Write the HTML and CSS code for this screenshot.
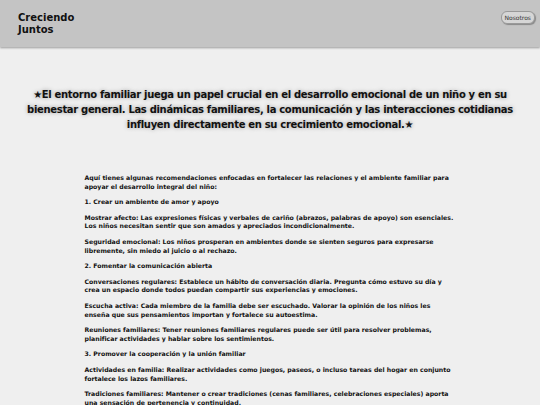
FILE: index.html
```html
<!DOCTYPE html>
<html lang="es">
<head>
<meta charset="utf-8">
<title>Creciendo Juntos</title>
<link rel="stylesheet" href="styles.css">
</head>
<body>
<header class="topbar">
  <div class="brand">Creciendo<br>Juntos</div>
  <button class="nav-btn">Nosotros</button>
</header>
<main class="content">
  <h1 class="lead">★El entorno familiar juega un papel crucial en el desarrollo emocional de un niño y en su bienestar general. Las dinámicas familiares, la comunicación y las interacciones cotidianas influyen directamente en su crecimiento emocional.★</h1>
  <section class="article">
    <p>Aquí tienes algunas recomendaciones enfocadas en fortalecer las relaciones y el ambiente familiar para apoyar el desarrollo integral del niño:</p>
    <p>1. Crear un ambiente de amor y apoyo</p>
    <p>Mostrar afecto: Las expresiones físicas y verbales de cariño (abrazos, palabras de apoyo) son esenciales. Los niños necesitan sentir que son amados y apreciados incondicionalmente.</p>
    <p>Seguridad emocional: Los niños prosperan en ambientes donde se sienten seguros para expresarse libremente, sin miedo al juicio o al rechazo.</p>
    <p>2. Fomentar la comunicación abierta</p>
    <p>Conversaciones regulares: Establece un hábito de conversación diaria. Pregunta cómo estuvo su día y crea un espacio donde todos puedan compartir sus experiencias y emociones.</p>
    <p>Escucha activa: Cada miembro de la familia debe ser escuchado. Valorar la opinión de los niños les enseña que sus pensamientos importan y fortalece su autoestima.</p>
    <p>Reuniones familiares: Tener reuniones familiares regulares puede ser útil para resolver problemas, planificar actividades y hablar sobre los sentimientos.</p>
    <p>3. Promover la cooperación y la unión familiar</p>
    <p>Actividades en familia: Realizar actividades como juegos, paseos, o incluso tareas del hogar en conjunto fortalece los lazos familiares.</p>
    <p>Tradiciones familiares: Mantener o crear tradiciones (cenas familiares, celebraciones especiales) aporta una sensación de pertenencia y continuidad.</p>
  </section>
</main>
</body>
</html>
```
FILE: styles.css
```css
html, body {
  margin: 0;
  padding: 0;
}
body {
  background: #efefef;
  font-family: "DejaVu Sans", sans-serif;
  color: #111;
  overflow: hidden;
}
.topbar {
  height: 47px;
  background: #c4c4c4;
  box-shadow: 0 1px 2px rgba(0,0,0,0.35);
  display: flex;
  justify-content: space-between;
  align-items: flex-start;
  padding: 0 5px 0 18px;
  box-sizing: border-box;
}
.brand {
  margin-top: 12px;
  font-size: 10px;
  font-weight: bold;
  line-height: 12px;
  color: #111;
}
.nav-btn {
  margin-top: 11px;
  font-family: "DejaVu Sans", sans-serif;
  font-size: 6px;
  color: #333;
  background: #d6d6d6;
  border: 1px solid #999;
  border-radius: 6px;
  padding: 2px 3px;
  box-shadow: 1px 1px 1px rgba(0,0,0,0.3);
}
.content {
  padding-top: 40px;
}
.lead {
  margin: 0 auto;
  width: 494px;
  text-align: center;
  font-size: 10px;
  letter-spacing: -0.32px;
  line-height: 15px;
  font-weight: bold;
  text-shadow: 0 0 4px rgba(0,0,0,0.35);
}
.article {
  width: 371px;
  margin: 42px auto 0;
  font-size: 6.2px;
  line-height: 8.6px;
  font-weight: bold;
}
.article p {
  margin: 0 0 7px;
}
```
